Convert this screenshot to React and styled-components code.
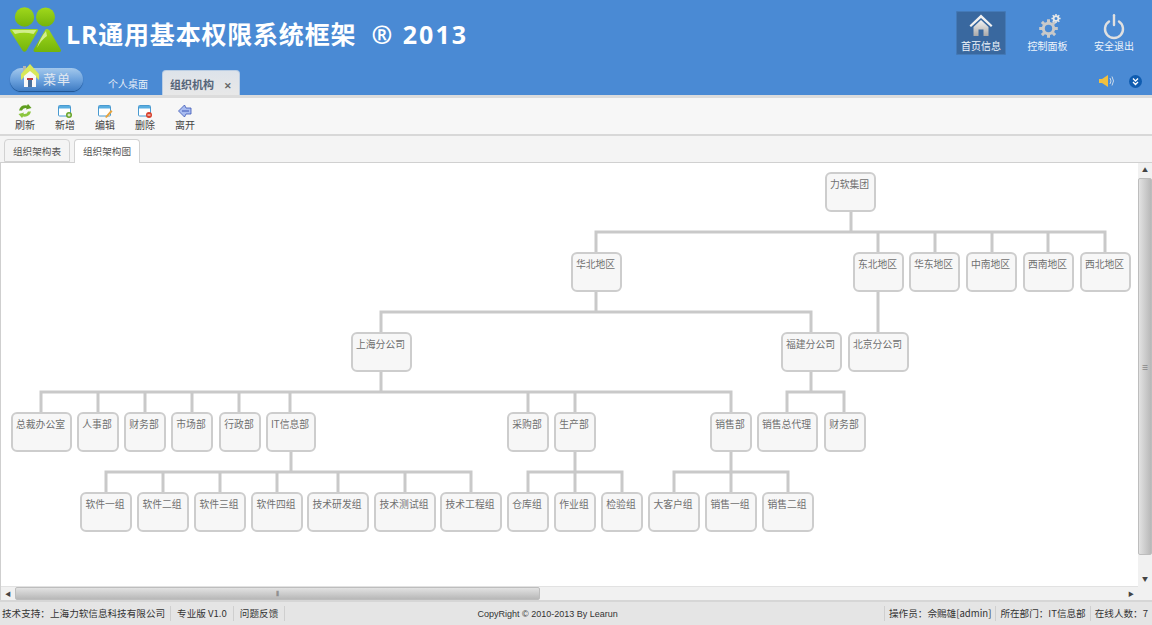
import React from "react";
import styled, { createGlobalStyle } from "styled-components";

const FONT = '"Noto Sans CJK SC", "Liberation Sans", sans-serif';

const GlobalStyle = createGlobalStyle`
    html, body {
        margin: 0;
        padding: 0;
        width: 100%;
        height: 100%;
        overflow: hidden;
        background: #fff;
    }
    * { box-sizing: border-box; }
`;

const Page = styled.div`
    width: 1152px;
    height: 625px;
    display: flex;
    flex-direction: column;
    font-family: ${FONT};
    font-size: 10px;
    color: #333;
`;

/* ---------- header ---------- */
const Header = styled.header`
    height: 95px;
    flex: none;
    background: #4a8ad4;
    display: flex;
    flex-direction: column;
`;
const TopRow = styled.div`
    height: 65px;
    display: flex;
    align-items: flex-start;
    padding-left: 10px;
`;
const Logo = styled.svg`
    width: 52px;
    height: 46px;
    margin-top: 7px;
    flex: none;
`;
const Title = styled.h1`
    margin: 16px 0 0 4px;
    font-family: "Open Sans", "Noto Sans CJK SC", sans-serif;
    font-weight: 700;
    font-size: 25px;
    line-height: 36px;
    letter-spacing: 0.8px;
    color: #fff;
    white-space: nowrap;
    flex: 1;
`;
const TitleTail = styled.span`
    margin-left: 8px;
    letter-spacing: 2px;
`;
const TopNav = styled.nav`
    display: flex;
    gap: 16.5px;
    margin: 11px 13px 0 0;
`;
const TopNavItem = styled.div`
    width: 50px;
    height: 44px;
    display: flex;
    flex-direction: column;
    align-items: center;
    padding-top: 3px;
    color: #eef4fb;
    font-size: 10px;
    line-height: 14px;
    border-radius: 2px;
    background: ${p => (p.$active ? "#39689f" : "transparent")};
    box-shadow: ${p => (p.$active ? "inset 0 0 0 1px #447ab8" : "none")};
    svg { margin-bottom: 1px; overflow: visible; }
`;
const TabRow = styled.div`
    height: 30px;
    display: flex;
    align-items: flex-end;
    padding-left: 10px;
    position: relative;
`;
const MenuButton = styled.div`
    width: 73px;
    height: 23px;
    margin-bottom: 4px;
    border-radius: 12px;
    background: linear-gradient(#a3c8ec, #6aa0dc 55%, #3f7cc3);
    box-shadow: 0 1px 1px #1e528f;
    color: #e2e8f0;
    font-size: 13px;
    line-height: 22px;
    padding-left: 33px;
    letter-spacing: 1px;
    position: relative;
`;
const MenuHome = styled.svg`
    position: absolute;
    left: 11px;
    top: -4px;
`;
const HeaderTab = styled.div`
    height: 25px;
    line-height: 27px;
    text-align: center;
    flex: none;
    ${p =>
        p.$active
            ? `
        width: 78px;
        font-size: 11px;
        background: linear-gradient(#dde3ea, #e8e8e8);
        border: 1px solid #b9cde4;
        border-bottom: 0;
        border-radius: 4px 4px 0 0;
        color: #56657a;
        font-weight: 700;
    `
            : `
        width: 60px;
        font-size: 10px;
        margin-left: 15px;
        margin-right: 4px;
        color: #e6eef8;
    `}
`;
const TabClose = styled.span`
    margin-left: 10px;
    color: #666;
    font-size: 9px;
    font-weight: 700;
`;
const TabRowRight = styled.div`
    margin-left: auto;
    margin-right: 10px;
    margin-bottom: 7px;
    display: flex;
    align-items: center;
    gap: 14px;
    align-self: flex-end;
`;

/* ---------- toolbar ---------- */
const Toolbar = styled.div`
    height: 41px;
    flex: none;
    display: flex;
    padding: 8px 0 0 5px;
    background: #f7f7f7;
    border-top: 3px solid #dcdcdc;
    border-bottom: 2px solid #d8d8d8;
`;
const ToolButton = styled.div`
    width: 40px;
    display: flex;
    flex-direction: column;
    align-items: center;
    font-size: 10px;
    line-height: 13px;
    color: #444;
    svg { margin-bottom: -1px; margin-top: -3px; }
`;

/* ---------- sub tabs ---------- */
const SubTabs = styled.div`
    height: 27px;
    flex: none;
    display: flex;
    align-items: flex-end;
    gap: 4px;
    padding-left: 4px;
    background: #f4f4f4;
    border-bottom: 1px solid #d0d0d0;
`;
const SubTab = styled.div`
    width: 66px;
    height: ${p => (p.$active ? "24px" : "23px")};
    margin-bottom: ${p => (p.$active ? "-1px" : "0")};
    border: 1px solid #d2d2d2;
    border-bottom: ${p => (p.$active ? "0" : "1px solid #d2d2d2")};
    border-radius: 4px 4px 0 0;
    background: ${p => (p.$active ? "#fff" : "#f4f4f4")};
    font-size: 9.6px;
    line-height: 23px;
    text-align: center;
    color: #555;
`;

/* ---------- chart body ---------- */
const Body = styled.div`
    flex: 1;
    min-height: 0;
    display: grid;
    grid-template-columns: 1fr 14px;
    grid-template-rows: 1fr 14px;
    border-left: 1px solid #cfcfcf;
    background: #fff;
`;
const Canvas = styled.div`
    position: relative;
    overflow: hidden;
`;
const Links = styled.svg`
    position: absolute;
    left: -1px;
    top: -163px;
    width: 1152px;
    height: 625px;
`;
const OrgNode = styled.div`
    position: absolute;
    height: 40px;
    padding: 3px 2px 0 0;
    border: 2px solid #cdcdcd;
    border-radius: 6px;
    background: #f7f7f7;
    color: #707070;
    font-size: 9.8px;
    line-height: 14px;
    text-align: center;
    white-space: nowrap;
`;
const VScroll = styled.div`
    display: flex;
    flex-direction: column;
    background: #f1f1f1;
`;
const HScroll = styled.div`
    display: flex;
    background: #f1f1f1;
    border-top: 1px solid #e2e2e2;
`;
const ScrollArrow = styled.div`
    flex: none;
    width: 14px;
    height: 14px;
    display: flex;
    align-items: center;
    justify-content: center;
    color: #444;
    font-size: 6px;
    line-height: 1;
`;
const VTrack = styled.div`
    flex: 1;
    padding-bottom: 17px;
    display: flex;
`;
const VThumb = styled.div`
    flex: 1;
    margin-top: 1px;
    border: 1px solid #bdbdbd;
    border-radius: 2px;
    background: linear-gradient(90deg, #e2e2e2, #cdcdcd 50%, #b8b8b8);
    display: flex;
    align-items: center;
    justify-content: center;
    color: #666;
    font-size: 7px;
`;
const HTrack = styled.div`
    flex: 1;
    padding-right: 584px;
    display: flex;
`;
const HThumb = styled.div`
    flex: 1;
    border: 1px solid #bdbdbd;
    border-radius: 2px;
    background: linear-gradient(#e2e2e2, #cdcdcd 50%, #b8b8b8);
    display: flex;
    align-items: center;
    justify-content: center;
    color: #666;
    font-size: 7px;
    line-height: 1;
`;
const ScrollCorner = styled.div`
    background: #f1f1f1;
`;

/* ---------- footer ---------- */
const Footer = styled.footer`
    height: 25px;
    flex: none;
    display: flex;
    align-items: center;
    background: #e5e5e5;
    border-top: 2px solid #d6d6d6;
    font-size: 9.6px;
    color: #333;
    padding-left: 2px;
`;
const FooterLeftCell = styled.div`
    height: 15px;
    line-height: 15px;
    padding: 0 6px;
    white-space: nowrap;
    border-right: 1px solid #cfcfcf;
    &:first-child {
        padding: 0 5px 0 0;
    }
`;
const FooterRightCell = styled.div`
    height: 15px;
    line-height: 15px;
    padding: 0 4px;
    white-space: nowrap;
    border-left: 1px solid #cfcfcf;
`;
const FooterCenter = styled.div`
    flex: 1;
    font-family: "Liberation Sans", sans-serif;
    font-size: 9px;
    text-align: center;
    padding-right: 74px;
    white-space: nowrap;
`;

/* ---------- chart data ---------- */
const NODES = [
    ["力软集团", 825, 172, 51],
    ["华北地区", 571, 252, 51],
    ["东北地区", 853, 252, 51],
    ["华东地区", 909, 252, 51],
    ["中南地区", 966, 252, 51],
    ["西南地区", 1023, 252, 51],
    ["西北地区", 1080, 252, 51],
    ["上海分公司", 351, 332, 61],
    ["福建分公司", 781, 332, 61],
    ["北京分公司", 848, 332, 61],
    ["总裁办公室", 11, 412, 61],
    ["人事部", 77, 412, 42],
    ["财务部", 124, 412, 42],
    ["市场部", 171, 412, 42],
    ["行政部", 219, 412, 42],
    ["IT信息部", 266, 412, 50],
    ["采购部", 507, 412, 42],
    ["生产部", 554, 412, 42],
    ["销售部", 710, 412, 42],
    ["销售总代理", 757, 412, 61],
    ["财务部", 824, 412, 42],
    ["软件一组", 80, 492, 52],
    ["软件二组", 137, 492, 52],
    ["软件三组", 194, 492, 52],
    ["软件四组", 251, 492, 52],
    ["技术研发组", 307, 492, 62],
    ["技术测试组", 374, 492, 62],
    ["技术工程组", 440, 492, 62],
    ["仓库组", 507, 492, 42],
    ["作业组", 554, 492, 42],
    ["检验组", 601, 492, 42],
    ["大客户组", 648, 492, 52],
    ["销售一组", 705, 492, 52],
    ["销售二组", 762, 492, 52],
];

// [stem x, top of stem, y of the bar, drop xs, bottom of the drops]
const LINKS = [
    [851, 211, 232, [596, 878, 935, 992, 1048, 1105], 252],
    [878, 291, 312, [878], 332],
    [596, 291, 312, [381, 811], 332],
    [381, 371, 392, [41, 98, 145, 192, 239, 290, 528, 575, 731], 412],
    [811, 371, 392, [787, 844], 412],
    [291, 451, 472, [106, 163, 220, 277, 338, 405, 471], 492],
    [575, 451, 472, [528, 575, 622], 492],
    [731, 451, 472, [674, 731, 788], 492],
];

const linkPath = ([sx, top, bar, drops, bottom]) => {
    const lo = Math.min(...drops);
    const hi = Math.max(...drops);
    return (
        `M${sx} ${top}V${bar}M${lo} ${bottom}V${bar}H${hi}V${bottom}` +
        drops.map(x => `M${x} ${bar}V${bottom}`).join("")
    );
};

/* ---------- icons ---------- */
const LogoMark = () => (
    <Logo viewBox="0 0 52 46">
        <defs>
            <linearGradient id="lg" x1="0" y1="0" x2="0" y2="1">
                <stop offset="0" stopColor="#a0d81c" />
                <stop offset="1" stopColor="#74b40a" />
            </linearGradient>
        </defs>
        <circle cx="14.5" cy="10" r="9.7" fill="url(#lg)" />
        <circle cx="35.5" cy="10" r="9.5" fill="url(#lg)" />
        <path d="M1.5 22 H26.5 Q28.800 22 27.500 24.500 L16.500 43.500 Q14.500 46 12.500 43.500 L.5 24.500 Q-.5 22 1.500 22Z" fill="url(#lg)" />
        <path d="M2 23 H26.500 L23.500 27 Q14 24.500 5 27Z" fill="#d2ee8c" />
        <path d="M35.500 22.500 Q37.500 21 39.500 23.500 L50.500 42 Q52 45 49 45 H25.500 Q22.500 45 24 42Z" fill="url(#lg)" />
        <path d="M36 24 Q30 31 27 41 Q31 33 37 29Z" fill="#d2ee8c" />
    </Logo>
);

const HomeIcon = () => (
    <svg width="26" height="24" viewBox="0 0 26 24">
        <defs>
            <linearGradient id="hg" x1="0" y1="0" x2="0" y2="1">
                <stop offset="0" stopColor="#f4f4f4" />
                <stop offset="1" stopColor="#a8a8a8" />
            </linearGradient>
        </defs>
        <path d="M13 .5 L24.500 11.500 L23 13 L13 4 L3 13 L1.500 11.500Z" fill="#f2f2f2" />
        <path d="M5.500 13 L13 6 L20.500 13 V22 H15.500 V15.500 H10.500 V22 H5.500Z" fill="url(#hg)" />
    </svg>
);

const gearTeeth = (cx, cy, inner, outer, n) =>
    Array.from({ length: n }, (_, i) => {
        const a = (i * 2 * Math.PI) / n;
        const x1 = cx + inner * Math.cos(a);
        const y1 = cy + inner * Math.sin(a);
        const x2 = cx + outer * Math.cos(a);
        const y2 = cy + outer * Math.sin(a);
        return `M${x1.toFixed(1)} ${y1.toFixed(1)}L${x2.toFixed(1)} ${y2.toFixed(1)}`;
    }).join("");

const GearIcon = () => (
    <svg width="26" height="24" viewBox="0 0 26 24">
        <g fill="none" stroke="#c9c9c9">
            <circle cx="13.500" cy="14.500" r="5.200" strokeWidth="3" />
            <path d={gearTeeth(13.5, 14.5, 6, 9.3, 8)} strokeWidth="3" />
        </g>
        <g fill="none" stroke="#e8e8e8">
            <circle cx="21" cy="4.500" r="2.400" strokeWidth="1.800" />
            <path d={gearTeeth(21, 4.5, 2.8, 4.6, 8)} strokeWidth="1.500" />
        </g>
    </svg>
);

const PowerIcon = () => (
    <svg width="26" height="24" viewBox="0 0 26 24">
        <g fill="none" stroke="#e0e0e0" strokeWidth="2.400" strokeLinecap="round">
            <path d="M8 7.500 A9 9 0 1 0 18 7.500" />
            <path d="M13 1.200 V11" />
        </g>
    </svg>
);

const MenuHomeIcon = () => (
    <MenuHome width="18" height="23" viewBox="0 0 18 23">
        <path d="M2 2 H5 V6 L2 9Z" fill="#b5b5b5" />
        <path d="M9 0 L18 10 V16 L15 13 H3 L0 16 V10Z" fill="#d8e85a" />
        <path d="M3 12 L9 7 L15 12 V23 H3Z" fill="#f8f8f8" />
        <path d="M6 14 H12 V16 H6Z" fill="#c23a3a" />
        <path d="M7 16 H11 V23 H7Z" fill="#4a6f9a" />
    </MenuHome>
);

const SpeakerIcon = () => (
    <svg width="16" height="14" viewBox="0 0 16 14">
        <path d="M0 5 H3 L9 1 V13 L3 9 H0Z" fill="#f0c040" />
        <path d="M11 4 Q13 7 11 10 M13 2.500 Q16 7 13 11.500" fill="none" stroke="#c9d9ea" strokeWidth="1" />
    </svg>
);

const ExpandIcon = () => (
    <svg width="13" height="13" viewBox="0 0 13 13">
        <circle cx="6.500" cy="6.500" r="6.500" fill="#0f5cb0" />
        <path d="M4 3.500 L6.500 6 L9 3.500 M4 7 L6.500 9.500 L9 7" fill="none" stroke="#fff" strokeWidth="1.300" />
    </svg>
);

const Refresh = () => (
    <svg width="16" height="16" viewBox="0 0 16 16">
        <path d="M2 7.500 Q3.500 1.500 10 2.500 L11 1 L14.500 5 L9 6.500 L9.500 5 Q6 4.500 5 7.500Z" fill="#5f9e20" />
        <path d="M14 8.500 Q12.500 14.500 6 13.500 L5 15 L1.500 11 L7 9.500 L6.500 11 Q10 11.500 11 8.500Z" fill="#8cc63f" />
    </svg>
);

const WindowIcon = ({ children }) => (
    <svg width="16" height="16" viewBox="0 0 16 16">
        <rect x="1.500" y="2.500" width="12" height="10.500" rx="1" fill="#fff" stroke="#4a9ad0" />
        <rect x="2" y="3" width="11" height="2.500" fill="#5aaee0" />
        {children}
    </svg>
);

const LeaveIcon = () => (
    <svg width="16" height="16" viewBox="0 0 16 16">
        <path d="M7.500 2 L1.500 8 L7.500 14 L9 11 H14 V5 H9Z" fill="#a9bcf0" stroke="#3a55b5" strokeWidth=".8" />
        <path d="M5 8 H12" stroke="#3a55b5" strokeWidth="1" />
    </svg>
);

const TOOLS = [
    ["刷新", <Refresh />],
    ["新增", <WindowIcon><circle cx="12" cy="12" r="3" fill="#6aa52a" /><path d="M10.500 12H13.500M12 10.500V13.500" stroke="#fff" /></WindowIcon>],
    ["编辑", <WindowIcon><path d="M8 14 L14 7 L15.500 8.500 L9.500 15Z" fill="#e8a33c" /></WindowIcon>],
    ["删除", <WindowIcon><circle cx="12" cy="12" r="3" fill="#d8402c" /><path d="M10.500 12H13.500" stroke="#fff" /></WindowIcon>],
    ["离开", <LeaveIcon />],
];

const App = () => (
    <Page>
        <GlobalStyle />
        <Header>
            <TopRow>
                <LogoMark />
                <Title>LR通用基本权限系统框架 <TitleTail>® 2013</TitleTail></Title>
                <TopNav>
                    <TopNavItem $active><HomeIcon />首页信息</TopNavItem>
                    <TopNavItem><GearIcon />控制面板</TopNavItem>
                    <TopNavItem><PowerIcon />安全退出</TopNavItem>
                </TopNav>
            </TopRow>
            <TabRow>
                <MenuButton><MenuHomeIcon />菜单</MenuButton>
                <HeaderTab>个人桌面</HeaderTab>
                <HeaderTab $active>组织机构<TabClose>✕</TabClose></HeaderTab>
                <TabRowRight>
                    <SpeakerIcon />
                    <ExpandIcon />
                </TabRowRight>
            </TabRow>
        </Header>
        <Toolbar>
            {TOOLS.map(([label, icon]) => (
                <ToolButton key={label}>{icon}{label}</ToolButton>
            ))}
        </Toolbar>
        <SubTabs>
            <SubTab>组织架构表</SubTab>
            <SubTab $active>组织架构图</SubTab>
        </SubTabs>
        <Body>
            <Canvas>
                <Links>
                    <path
                        d={LINKS.map(linkPath).join("")}
                        fill="none"
                        stroke="#c9c9c9"
                        strokeWidth="3"
                    />
                </Links>
                {NODES.map(([label, x, y, w]) => (
                    <OrgNode key={label + x} style={{ left: x - 1, top: y - 163, width: w }}>
                        {label}
                    </OrgNode>
                ))}
            </Canvas>
            <VScroll>
                <ScrollArrow>▲</ScrollArrow>
                <VTrack><VThumb>≡</VThumb></VTrack>
                <ScrollArrow>▼</ScrollArrow>
            </VScroll>
            <HScroll>
                <ScrollArrow>◀</ScrollArrow>
                <HTrack><HThumb>⦀</HThumb></HTrack>
                <ScrollArrow>▶</ScrollArrow>
            </HScroll>
            <ScrollCorner />
        </Body>
        <Footer>
            <FooterLeftCell>技术支持：上海力软信息科技有限公司</FooterLeftCell>
            <FooterLeftCell>专业版 V1.0</FooterLeftCell>
            <FooterLeftCell>问题反馈</FooterLeftCell>
            <FooterCenter>CopyRight © 2010-2013 By Learun</FooterCenter>
            <FooterRightCell>操作员：佘赐雄[admin]</FooterRightCell>
            <FooterRightCell>所在部门：IT信息部</FooterRightCell>
            <FooterRightCell>在线人数：7</FooterRightCell>
        </Footer>
    </Page>
);

export default App;
